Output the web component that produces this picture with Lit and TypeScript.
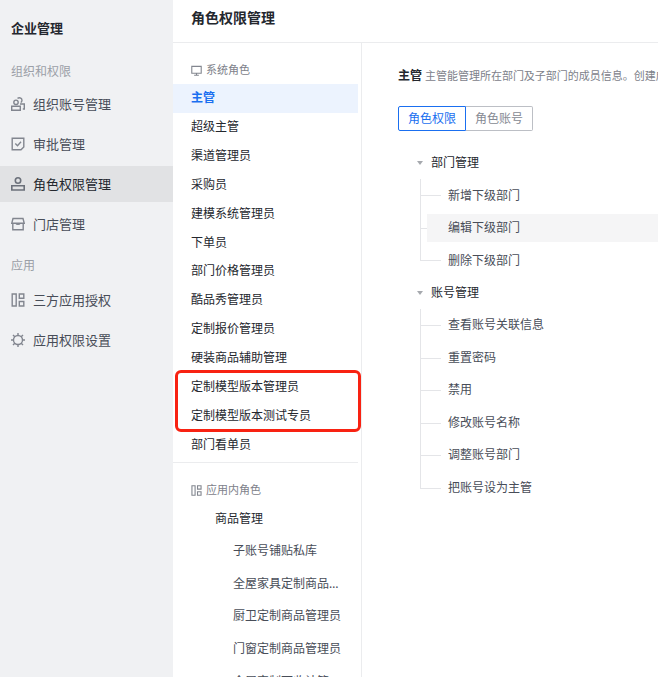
import { LitElement, html, css, svg } from "lit";
import { customElement, state } from "lit/decorators.js";
import { classMap } from "lit/directives/class-map.js";

const icons = {
  org: svg`<path d="M.7 9.3h8.600v4H.7z"/><circle cx="5" cy="5.300" r="2.200"/><path d="M6.500 1.300C8.800 0 11.300 1.400 10.900 3.800c-.2.900-.6 1.300-1.200 1.700M9 7h4.300v5h-1.500"/>`,
  approve: svg`<path d="M1.200 1.200h11.600v8.800l-2.800 2.800H1.200z"/><path d="M4.300 6.500l2.200 2.200 3.500-3.900"/>`,
  role: svg`<circle cx="7" cy="3.500" r="2.700"/><path d="M.8 8.800h12.400v4.200H.8z"/>`,
  store: svg`<path d="M2 1.500h10l1.200 4.700H.8zM1.800 6.200v6.500h10.400V6.200M5 6.500c.5 1.200 3.500 1.200 4 0"/>`,
  apps: svg`<path d="M1.200 1h4v12h-4zM8.300 1h4.500v4.300H8.300zM8.300 8.500h4.500V13H8.300z"/>`,
  gear: svg`<circle cx="7" cy="7" r="4.500"/><path d="M7 0v2.500M7 11.500V14M0 7h2.500M11.500 7H14M2 2l1.800 1.800M10.200 10.200L12 12M12 2l-1.800 1.800M3.800 10.200L2 12"/>`,
  screen: svg`<path d="M1 1.800h12v8.700H1zM7 10.500V13M4 13h6"/>`,
};

const icon = (name: keyof typeof icons) =>
  html`<svg class="icon" viewBox="0 0 14 14" aria-hidden="true">${icons[name]}</svg>`;

const nav: { title: string; items: [keyof typeof icons, string][] }[] = [
  {
    title: "组织和权限",
    items: [
      ["org", "组织账号管理"],
      ["approve", "审批管理"],
      ["role", "角色权限管理"],
      ["store", "门店管理"],
    ],
  },
  {
    title: "应用",
    items: [
      ["apps", "三方应用授权"],
      ["gear", "应用权限设置"],
    ],
  },
];

const systemRoles = [
  "主管",
  "超级主管",
  "渠道管理员",
  "采购员",
  "建模系统管理员",
  "下单员",
  "部门价格管理员",
  "酷品秀管理员",
  "定制报价管理员",
  "硬装商品辅助管理",
  "定制模型版本管理员",
  "定制模型版本测试专员",
  "部门看单员",
];

const appRoles = [
  "子账号铺贴私库",
  "全屋家具定制商品管理员",
  "厨卫定制商品管理员",
  "门窗定制商品管理员",
  "全屋定制可收计管理员",
];

const permissions = [
  { name: "部门管理", items: ["新增下级部门", "编辑下级部门", "删除下级部门"] },
  {
    name: "账号管理",
    items: ["查看账号关联信息", "重置密码", "禁用", "修改账号名称", "调整账号部门", "把账号设为主管"],
  },
];

@customElement("app-root")
export class AppRoot extends LitElement {
  @state() private role = "主管";
  @state() private tab = "角色权限";
  @state() private hovered = "编辑下级部门";

  static styles = css`
    :host {
      display: grid;
      grid-template-columns: 173px minmax(0, 1fr);
      height: 100vh;
      overflow: hidden;
      background: #fff;
      color: #24272e;
      font: 12px/20px "Noto Sans", "Noto Sans CJK SC", sans-serif;
    }
    * {
      box-sizing: border-box;
    }
    h1, h2, h3, p, ul {
      margin: 0;
      padding: 0;
      list-style: none;
      font-size: inherit;
    }
    button {
      border: 0;
      padding: 0;
      background: none;
      color: inherit;
      font: inherit;
      text-align: left;
      cursor: pointer;
    }
    .icon {
      flex: none;
      width: 14px;
      height: 14px;
      fill: none;
      stroke: #82868f;
      stroke-width: 1.4;
    }
    .sidebar {
      background: #f0f1f3;
      padding-top: 18px;
      overflow: hidden;
    }
    .brand {
      padding: 0 11px;
      font-size: 13px;
      font-weight: 600;
    }
    .nav-title {
      padding: 14px 11px 6px;
      color: #9b9fa7;
      font-weight: 400;
    }
    .brand + .nav-group .nav-title {
      padding-top: 24px;
      padding-bottom: 4px;
    }
    .nav-list {
      display: grid;
      gap: 4px;
    }
    .nav-link {
      display: flex;
      align-items: center;
      gap: 8px;
      height: 36px;
      padding: 0 11px;
      color: #484d58;
      font-size: 13px;
      text-decoration: none;
    }
    .nav-link.active {
      background: #e1e2e4;
      color: #24272e;
    }
    .nav-link.active .icon {
      stroke: #6c717b;
      stroke-width: 1.6;
    }
    .main {
      display: flex;
      flex-direction: column;
      min-height: 0;
    }
    .page-title {
      flex: none;
      padding: 8px 18px 14px;
      border-bottom: 1px solid #ebecee;
      font-size: 14px;
      font-weight: 600;
    }
    .columns {
      flex: 1;
      display: grid;
      grid-template-columns: 189px minmax(0, 1fr);
      min-height: 0;
    }
    .roles {
      padding-right: 3px;
      border-right: 1px solid #ebecee;
      overflow: hidden;
    }
    .section {
      display: flex;
      align-items: center;
      gap: 4px;
      padding: 17px 18px 4px;
      color: #7d818a;
      font-size: 11px;
      font-weight: 400;
    }
    .section .icon {
      width: 11px;
      height: 11px;
    }
    .role-list {
      position: relative;
      display: grid;
      grid-auto-rows: 1fr;
      min-height: 375px;
    }
    .role-item {
      display: grid;
    }
    .role {
      padding: 0 18px;
    }
    .role.active {
      background: #ecf3fe;
      color: #1a6ff0;
      font-weight: 600;
    }
    .highlight {
      position: absolute;
      grid-row: 11 / 13;
      inset: -2px -3px -2px 2px;
      border: 3px solid #f82212;
      border-radius: 6px;
      pointer-events: none;
    }
    .app-roles {
      margin-top: 3px;
      border-top: 1px solid #ebecee;
    }
    .group-name {
      padding: 5px 42px 6px;
      font-weight: 400;
    }
    .sub-list {
      display: grid;
      grid-auto-rows: 1fr;
      min-height: 163px;
    }
    .sub-item {
      display: grid;
    }
    .sub-role {
      width: 168px;
      padding-left: 60px;
      color: #484d58;
    }
    .clip {
      display: block;
      overflow: hidden;
      text-overflow: ellipsis;
      white-space: nowrap;
    }
    .detail {
      padding: 23px 0 0 36px;
      overflow: hidden;
    }
    .summary {
      overflow: hidden;
      color: #7d818a;
      font-size: 11px;
      white-space: nowrap;
    }
    .summary-name {
      color: #24272e;
      font-size: 12px;
      font-weight: 600;
    }
    .tabs {
      display: flex;
      margin-top: 20px;
    }
    .tab {
      height: 25px;
      padding: 0 9px;
      border: 1px solid #bcbfc5;
      border-left-width: 0;
      border-radius: 0 2px 2px 0;
      color: #868a93;
    }
    .tab:first-child {
      border-left-width: 1px;
      border-radius: 2px 0 0 2px;
    }
    .tab.active {
      border-color: #1a6ff0;
      color: #1a6ff0;
    }
    .tree {
      display: grid;
      grid-auto-rows: 1fr;
      min-height: 357px;
      margin-top: 16px;
      padding-left: 18px;
    }
    .tree-group,
    .leaves {
      display: contents;
    }
    .node-title {
      display: flex;
      align-items: center;
      gap: 8px;
      padding-left: 1px;
    }
    .caret {
      border: solid transparent;
      border-width: 4px 3px 0;
      border-top-color: #a6a9ae;
    }
    .leaf {
      display: grid;
      grid-template-columns: 7px minmax(0, 1fr);
      margin-left: 4px;
    }
    .branch {
      display: grid;
      grid-template-rows: 17px 1fr;
      width: 21px;
      border-left: 1px solid #e4e5e8;
    }
    .leaf:last-child .branch {
      border-left: 0;
      grid-template-rows: 17px;
    }
    .arm {
      border-bottom: 1px solid #e4e5e8;
    }
    .leaf:last-child .arm {
      border-left: 1px solid #e4e5e8;
    }
    .leaf-text {
      position: relative;
      align-self: center;
      padding: 4px 0 4px 21px;
      color: #484d58;
    }
    .leaf-text.hovered {
      background: #f5f5f6;
    }
  `;

  render() {
    return html`
      <nav class="sidebar">
        <h2 class="brand">企业管理</h2>
        ${nav.map(
          (group) => html`<section class="nav-group">
            <h3 class="nav-title">${group.title}</h3>
            <ul class="nav-list">
              ${group.items.map(([name, label]) => {
                const active = label === "角色权限管理";
                return html`<li>
                  <a href="#" class=${classMap({ "nav-link": true, active })}>${icon(name)}${label}</a>
                </li>`;
              })}
            </ul>
          </section>`
        )}
      </nav>
      <main class="main">
        <h1 class="page-title">角色权限管理</h1>
        <div class="columns">
          <div class="roles">
            <h2 class="section">${icon("screen")}系统角色</h2>
            <ul class="role-list">
              ${systemRoles.map(
                (name) => html`<li class="role-item">
                  <button
                    class=${classMap({ role: true, active: name === this.role })}
                    @click=${() => (this.role = name)}
                  >${name}</button>
                </li>`
              )}
              <li class="highlight" aria-hidden="true"></li>
            </ul>
            <section class="app-roles">
              <h2 class="section">${icon("apps")}应用内角色</h2>
              <h3 class="group-name">商品管理</h3>
              <ul class="sub-list">
                ${appRoles.map(
                  (name) => html`<li class="sub-item">
                    <button class="sub-role"><span class="clip">${name}</span></button>
                  </li>`
                )}
              </ul>
            </section>
          </div>
          <div class="detail">
            <p class="summary">
              <strong class="summary-name">主管</strong>
              主管能管理所在部门及子部门的成员信息。创建成员
            </p>
            <div class="tabs">
              ${["角色权限", "角色账号"].map(
                (name) => html`<button
                  class=${classMap({ tab: true, active: name === this.tab })}
                  @click=${() => (this.tab = name)}
                >${name}</button>`
              )}
            </div>
            <ul class="tree">
              ${permissions.map(
                (group) => html`<li class="tree-group">
                  <button class="node-title"><span class="caret"></span>${group.name}</button>
                  <ul class="leaves">
                    ${group.items.map(
                      (name) => html`<li class="leaf" @mouseenter=${() => (this.hovered = name)}>
                        <span class="branch"><span class="arm"></span></span>
                        <span class=${classMap({ "leaf-text": true, hovered: name === this.hovered })}>${name}</span>
                      </li>`
                    )}
                  </ul>
                </li>`
              )}
            </ul>
          </div>
        </div>
      </main>
    `;
  }
}
